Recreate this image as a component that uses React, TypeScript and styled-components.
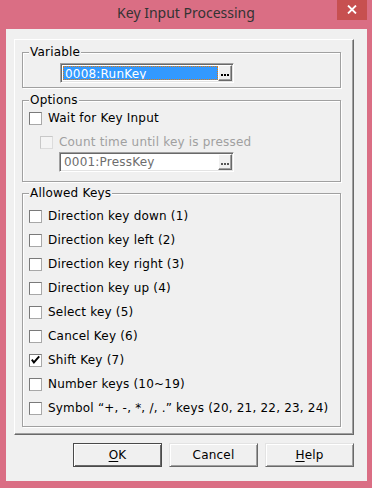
import React from 'react';
import styled, { createGlobalStyle } from 'styled-components';

const GlobalStyle = createGlobalStyle`
  html, body {
    margin: 0;
    padding: 0;
    background: #da6e84;
  }
  body {
    font-family: "DejaVu Sans", "Liberation Sans", sans-serif;
    font-size: 12px;
    letter-spacing: 0.2px;
    color: #000;
  }
  * {
    box-sizing: border-box;
  }
`;

const allowedKeys = [
    { label: 'Direction key down (1)', checked: false },
    { label: 'Direction key left (2)', checked: false },
    { label: 'Direction key right (3)', checked: false },
    { label: 'Direction key up (4)', checked: false },
    { label: 'Select key (5)', checked: false },
    { label: 'Cancel Key (6)', checked: false },
    { label: 'Shift Key (7)', checked: true },
    { label: 'Number keys (10~19)', checked: false },
    { label: 'Symbol \u201C+, -, *, /, .\u201D keys (20, 21, 22, 23, 24)', checked: false },
];

function Dots({ color }: { color: string }) {
    return (
        <svg width="8" height="2" viewBox="0 0 8 2">
            <rect x="0" y="0" width="2" height="2" fill={color} />
            <rect x="3" y="0" width="2" height="2" fill={color} />
            <rect x="6" y="0" width="2" height="2" fill={color} />
        </svg>
    );
}

function Check({ checked, disabled, label, indent, height }: {
    checked?: boolean; disabled?: boolean; label: string; indent?: number; height?: number;
}) {
    return (
        <CheckRow $indent={indent ?? 0} $height={height ?? 24}>
            <Box $disabled={!!disabled}>
                {checked && (
                    <svg width="11" height="11" viewBox="0 0 11 11">
                        <path d="M1.8 4.6 L3.9 7.4 L9.2 1.4" fill="none" stroke="#000" strokeWidth="1.9" />
                    </svg>
                )}
            </Box>
            <CheckLabel $disabled={!!disabled}>{label}</CheckLabel>
        </CheckRow>
    );
}

function App() {
    return (
        <>
            <GlobalStyle />
            <Window>
                <TitleBar>
                    <span />
                    <TitleText>Key Input Processing</TitleText>
                    <CloseButton>
                        <svg width="10" height="9" viewBox="0 0 10 9">
                            <path d="M1 0.5 L9 8.5 M9 0.5 L1 8.5" stroke="#fff" strokeWidth="1.8" />
                        </svg>
                    </CloseButton>
                </TitleBar>
                <Client>
                    <Panel>
                        <Group $mt={0} $pb={4}>
                            <GroupLabel>Variable</GroupLabel>
                            <FieldBox $width={174} $ml={37} $mt={4}>
                                <FieldText $selected>
                                    <SelectedText>0008:RunKey</SelectedText>
                                </FieldText>
                                <EllipsisButton>
                                    <Dots color="#000" />
                                </EllipsisButton>
                            </FieldBox>
                        </Group>
                        <Group $mt={12} $pb={9}>
                            <GroupLabel>Options</GroupLabel>
                            <Check label="Wait for Key Input" />
                            <Check label="Count time until key is pressed" disabled indent={11} height={21} />
                            <FieldBox $width={175} $ml={36} $mt={0}>
                                <FieldText $disabled>0001:PressKey</FieldText>
                                <EllipsisButton>
                                    <Dots color="#555" />
                                </EllipsisButton>
                            </FieldBox>
                        </Group>
                        <Group $mt={11} $pb={5}>
                            <GroupLabel>Allowed Keys</GroupLabel>
                            <CheckList>
                                {allowedKeys.map((k) => (
                                    <Check key={k.label} label={k.label} checked={k.checked} />
                                ))}
                            </CheckList>
                        </Group>
                    </Panel>
                    <ButtonRow>
                        <DialogButton $default><u>O</u>K</DialogButton>
                        <DialogButton>Cancel</DialogButton>
                        <DialogButton><u>H</u>elp</DialogButton>
                    </ButtonRow>
                </Client>
            </Window>
        </>
    );
}

const Window = styled.div`
    width: 372px;
    height: 488px;
    background: #da6e84;
    display: flex;
    flex-direction: column;
`;

const TitleBar = styled.div`
    height: 29px;
    display: grid;
    grid-template-columns: 1fr auto 1fr;
`;

const TitleText = styled.div`
    font-family: "Noto Sans", "Open Sans", sans-serif;
    font-size: 14px;
    letter-spacing: 0;
    line-height: 20px;
    margin-top: 3px;
    color: #333;
    white-space: nowrap;
`;

const CloseButton = styled.div`
    justify-self: end;
    margin-right: 5px;
    width: 30px;
    height: 20px;
    background: #c75050;
    display: flex;
    align-items: center;
    justify-content: center;
    padding-bottom: 1px;
`;

const Client = styled.div`
    flex: 1;
    margin: 0 5px 7px 6px;
    background: #f0f0f0;
    padding: 10px 0 0 8px;
`;

const Panel = styled.div`
    width: 340px;
    height: 396px;
    border: 1px solid;
    border-color: #fff #696969 #696969 #fff;
    box-shadow: inset -1px -1px 0 #a0a0a0;
    padding: 12px 0 0 7px;
    display: flex;
    flex-direction: column;
`;

const Group = styled.div<{ $mt: number; $pb: number }>`
    width: 319px;
    margin-top: ${(p) => p.$mt}px;
    padding-bottom: ${(p) => p.$pb}px;
    border: 1px solid #a0a0a0;
    box-shadow: 1px 1px 0 #fff, inset 1px 1px 0 #fff;
`;

const GroupLabel = styled.div`
    width: fit-content;
    margin: -8px 0 0 6px;
    padding: 0 1px;
    line-height: 14px;
    background: #f0f0f0;
    white-space: nowrap;
`;

const FieldBox = styled.div<{ $width: number; $ml: number; $mt: number }>`
    width: ${(p) => p.$width}px;
    height: 20px;
    margin: ${(p) => p.$mt}px 0 0 ${(p) => p.$ml}px;
    display: flex;
    padding: 2px;
    background: #fff;
    border: 1px solid;
    border-color: #a0a0a0 #fff #fff #a0a0a0;
    box-shadow: inset 1px 1px 0 #696969, inset -1px -1px 0 #e3e3e3;
`;

const FieldText = styled.div<{ $selected?: boolean; $disabled?: boolean }>`
    flex: 1;
    line-height: 14px;
    padding-left: ${(p) => (p.$selected ? 0 : 2)}px;
    background: ${(p) => (p.$selected ? '#3399ff' : '#fff')};
    color: ${(p) => (p.$disabled ? '#6d6d6d' : '#000')};
    border: ${(p) => (p.$selected ? '1px dotted #e07a10' : 'none')};
    white-space: nowrap;
    overflow: hidden;
`;

const SelectedText = styled.span`
    color: #fff;
    padding-left: 1px;
    line-height: 12px;
`;

const EllipsisButton = styled.div`
    width: 14px;
    background: #f0f0f0;
    border: 1px solid;
    border-color: #fff #696969 #696969 #fff;
    box-shadow: inset -1px -1px 0 #a0a0a0;
    display: flex;
    align-items: center;
    justify-content: center;
    padding-top: 3px;
    margin: -1px -1px -1px 0;
`;

const CheckList = styled.div`
    padding-top: 5px;
`;

const CheckRow = styled.div<{ $indent: number; $height: number }>`
    display: flex;
    align-items: flex-start;
    height: ${(p) => p.$height}px;
    padding-left: ${(p) => 6 + p.$indent}px;
`;

const Box = styled.div<{ $disabled: boolean }>`
    width: 13px;
    height: 13px;
    margin-top: 5px;
    flex: none;
    background: ${(p) => (p.$disabled ? '#f4f4f4' : '#fff')};
    border: 1px solid;
    border-color: ${(p) => (p.$disabled ? '#c8c8c8 #dcdcdc #dcdcdc #c8c8c8' : '#7a7a7a #a8a8a8 #a8a8a8 #7a7a7a')};
    display: flex;
    align-items: center;
    justify-content: center;
`;

const CheckLabel = styled.span<{ $disabled: boolean }>`
    margin: 4px 0 0 6px;
    line-height: 14px;
    white-space: nowrap;
    color: ${(p) => (p.$disabled ? '#a0a0a0' : '#000')};
`;

const ButtonRow = styled.div`
    width: 340px;
    margin-top: 8px;
    display: flex;
    justify-content: flex-end;
    gap: 7px;
`;

const DialogButton = styled.div<{ $default?: boolean }>`
    width: 89px;
    height: 24px;
    background: #f0f0f0;
    display: flex;
    align-items: center;
    justify-content: center;
    line-height: 14px;
    border: 1px solid;
    border-color: ${(p) => (p.$default ? '#4a4a4a' : '#e3e3e3 #696969 #696969 #e3e3e3')};
    box-shadow: ${(p) => (p.$default
        ? 'inset 1px 1px 0 #fff, inset -1px -1px 0 #696969'
        : 'inset 1px 1px 0 #fff, inset -1px -1px 0 #a0a0a0')};
    u {
        text-decoration: underline;
        text-underline-offset: 2px;
    }
`;

export default App;
